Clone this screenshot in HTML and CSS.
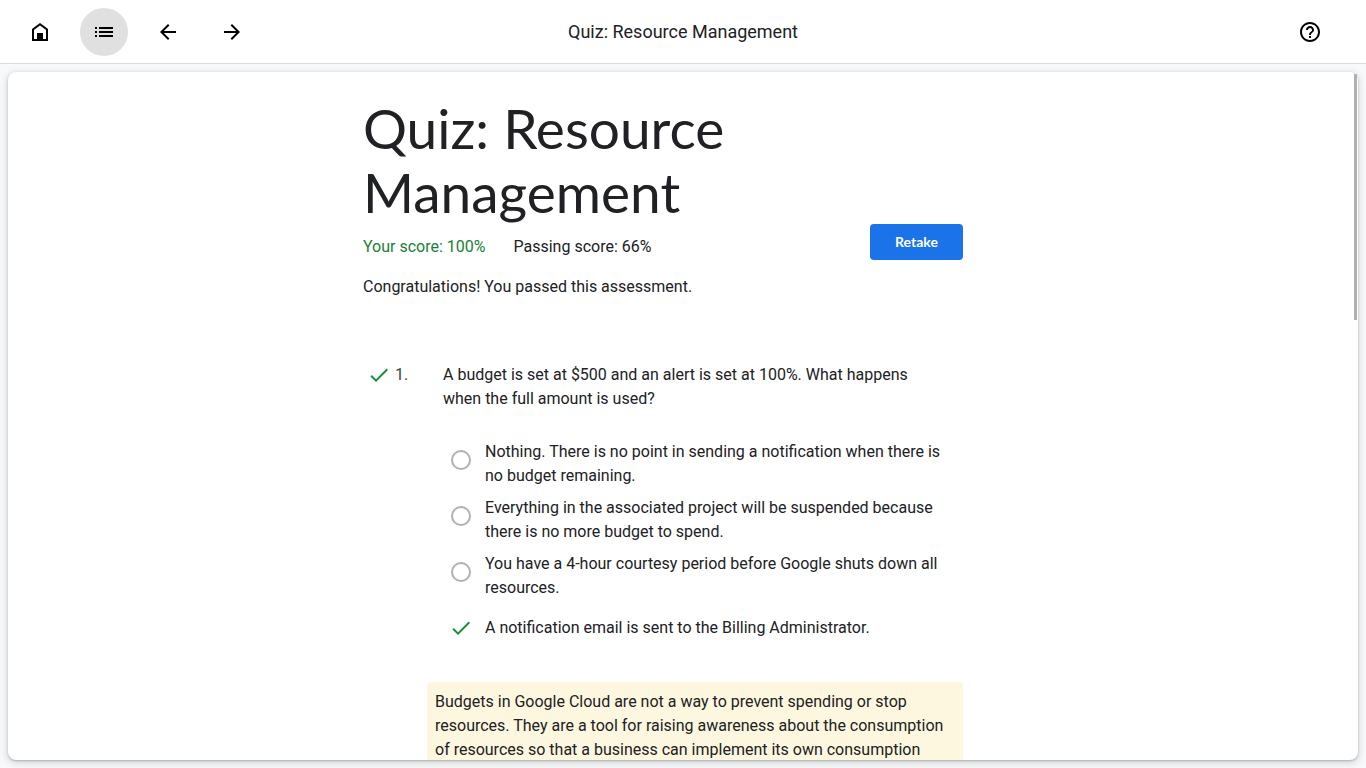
FILE: index.html
```
<!DOCTYPE html>
<html lang="en">
<head>
<meta charset="utf-8">
<meta name="viewport" content="width=device-width, initial-scale=1">
<title>Quiz: Resource Management</title>
<link rel="stylesheet" href="styles.css">
</head>
<body>
<header class="toolbar">
  <nav class="toolbar-nav" aria-label="Course">
    <a class="icon-button" href="#" aria-label="Home">
      <svg class="icon" viewBox="0 0 24 24"><path d="M5 20V9.500L12 4.300l7 5.200V20z" fill="none" stroke="currentColor" stroke-width="2"/><path d="M9 13h6v8H9z"/></svg>
    </a>
    <button class="icon-button icon-button-active" type="button" aria-label="Outline">
      <svg class="icon" viewBox="0 0 24 24"><path d="M3 7h2v2H3zm4 0h14v2H7zm-4 4h2v2H3zm4 0h14v2H7zm-4 4h2v2H3zm4 0h14v2H7z"/></svg>
    </button>
    <a class="icon-button" href="#" aria-label="Previous">
      <svg class="icon" viewBox="0 0 24 24"><path d="M20 11H7.830l5.590-5.590L12 4l-8 8 8 8 1.410-1.410L7.830 13H20z"/></svg>
    </a>
    <a class="icon-button" href="#" aria-label="Next">
      <svg class="icon" viewBox="0 0 24 24"><path d="M12 4l-1.410 1.410L16.170 11H4v2h12.170l-5.580 5.590L12 20l8-8z"/></svg>
    </a>
  </nav>
  <div class="toolbar-title">Quiz: Resource Management</div>
  <div class="toolbar-end">
    <button class="icon-button" type="button" aria-label="Help">
      <svg class="icon" viewBox="0 0 24 24"><path d="M11 18h2v-2h-2zm1-16C6.480 2 2 6.480 2 12s4.480 10 10 10 10-4.480 10-10S17.520 2 12 2zm0 18c-4.410 0-8-3.590-8-8s3.590-8 8-8 8 3.590 8 8-3.590 8-8 8zm0-14c-2.210 0-4 1.790-4 4h2c0-1.100.9-2 2-2s2 .9 2 2c0 2-3 1.750-3 5h2c0-2.250 3-2.500 3-5 0-2.210-1.790-4-4-4z"/></svg>
    </button>
  </div>
</header>
<main class="stage">
  <div class="card">
    <div class="card-scroll">
      <div class="quiz">
        <h1 class="quiz-title">Quiz: Resource Management</h1>
        <div class="result">
          <p class="scores"><span class="score-own">Your score: 100%</span><span>Passing score: 66%</span></p>
          <button class="retake" type="button">Retake</button>
        </div>
        <p class="verdict">Congratulations! You passed this assessment.</p>
        <section class="question">
          <div class="question-mark">
            <svg class="icon check" viewBox="0 0 24 24" role="img" aria-label="Correct"><path d="M9 16.170L4.830 12l-1.420 1.410L9 19 21 7l-1.410-1.410z"/></svg>
            <span class="question-number">1.</span>
          </div>
          <div class="question-body">
            <p class="question-text">A budget is set at $500 and an alert is set at 100%. What happens when the full amount is used?</p>
            <div class="options">
              <div class="option">
                <span class="option-mark"><input class="radio" type="radio" name="q1" id="q1a" disabled></span>
                <label class="option-label" for="q1a">Nothing. There is no point in sending a notification when there is no budget remaining.</label>
              </div>
              <div class="option">
                <span class="option-mark"><input class="radio" type="radio" name="q1" id="q1b" disabled></span>
                <label class="option-label" for="q1b">Everything in the associated project will be suspended because there is no more budget to spend.</label>
              </div>
              <div class="option">
                <span class="option-mark"><input class="radio" type="radio" name="q1" id="q1c" disabled></span>
                <label class="option-label" for="q1c">You have a 4-hour courtesy period before Google shuts down all resources.</label>
              </div>
              <div class="option">
                <span class="option-mark"><svg class="icon check" viewBox="0 0 24 24" role="img" aria-label="Correct answer"><path d="M9 16.170L4.830 12l-1.420 1.410L9 19 21 7l-1.410-1.410z"/></svg></span>
                <span class="option-label option-label-single">A notification email is sent to the Billing Administrator.</span>
              </div>
            </div>
          </div>
        </section>
        <p class="explanation">Budgets in Google Cloud are not a way to prevent spending or stop resources. They are a tool for raising awareness about the consumption of resources so that a business can implement its own consumption</p>
      </div>
    </div>
    <div class="scroll-thumb"></div>
  </div>
</main>
</body>
</html>
```
FILE: styles.css
```
*, *::before, *::after { box-sizing: border-box; }

body {
  margin: 0;
  height: 100vh;
  display: flex;
  flex-direction: column;
  background: #f8f9fa;
  color: #202124;
  font: 16px/24px Roboto, sans-serif;
}

h1, p { margin: 0; }

.toolbar {
  display: grid;
  grid-template-columns: 1fr auto 1fr;
  align-items: center;
  height: 64px;
  padding: 0 32px 0 16px;
  background: #fff;
  border-bottom: 1px solid #dadce0;
}
.toolbar-nav { display: flex; gap: 16px; }
.toolbar-title { font-size: 18px; padding-left: 16px; }
.toolbar-end { display: flex; justify-content: flex-end; }

.icon-button {
  display: flex;
  align-items: center;
  justify-content: center;
  width: 48px;
  height: 48px;
  padding: 0;
  border: 0;
  border-radius: 50%;
  background: none;
  color: #000;
}
.icon-button-active { background: #e0e0e0; }

.icon { display: block; width: 24px; height: 24px; fill: currentColor; }
.check { color: #1e8e3e; }

.stage {
  flex: 1;
  min-height: 0;
  padding: 8px;
}
.card {
  position: relative;
  height: 100%;
  border-radius: 8px;
  background: #fff;
  box-shadow: 0 1px 2px rgba(60, 64, 67, .3), 0 2px 6px 2px rgba(60, 64, 67, .15);
}
.card-scroll {
  height: 100%;
  overflow-y: auto;
  scrollbar-width: none;
  border-radius: 8px;
}
.scroll-thumb {
  position: absolute;
  top: 2px;
  right: 1px;
  width: 3px;
  height: 246px;
  background: #b0b0b0;
}

.quiz {
  max-width: 640px;
  margin: 0 auto;
  padding: 24px 40px 24px 0;
}
.quiz-title { font-family: Lato, sans-serif; font-size: 55px; line-height: 64px; font-weight: 400; }

.result { display: flex; justify-content: space-between; }
.scores { display: flex; gap: 28px; padding-top: 11px; }
.score-own { color: #188038; }
.retake {
  min-width: 93px;
  height: 36px;
  padding: 0 24px;
  border: 0;
  border-radius: 4px;
  background: #1a73e8;
  color: #fff;
  font: bold 14px/20px Lato, sans-serif;
}
.verdict { padding-top: 15px; }

.question { display: flex; padding-top: 64px; }
.question-mark { display: flex; gap: 4px; width: 80px; padding-left: 4px; }
.question-number { color: #3c4043; }
.question-body { flex: 1; }
.question-text { padding-right: 16px; }

.options { padding-top: 21px; }
.option { display: flex; min-height: 56px; }
.option-mark {
  display: flex;
  align-items: center;
  justify-content: center;
  width: 36px;
  height: 56px;
  margin-right: 6px;
}
.radio {
  appearance: none;
  width: 20px;
  height: 20px;
  margin: 0;
  border: 2px solid #b0b0b0;
  border-radius: 50%;
}
.option-label { flex: 1; padding: 8px 8px 0 0; }
.option-label-single { padding-top: 16px; }

.explanation {
  margin: 26px 0 0 64px;
  padding: 8px;
  border-radius: 4px;
  background: #fef7e0;
}
```
